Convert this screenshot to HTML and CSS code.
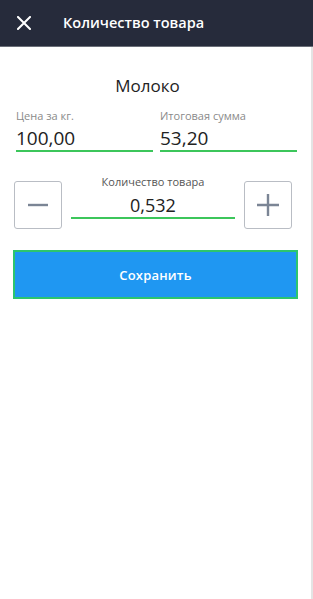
FILE: index.html
```html
<!DOCTYPE html>
<html lang="ru">
<head>
<meta charset="utf-8">
<title>Количество товара</title>
<link rel="stylesheet" href="styles.css">
</head>
<body>
<header class="topbar">
  <button class="close" aria-label="Закрыть">
    <svg width="14" height="14" viewBox="0 0 14 14"><path d="M1 1L13 13M13 1L1 13" stroke="#ffffff" stroke-width="2" stroke-linecap="square" fill="none"/></svg>
  </button>
  <h1 class="title">Количество товара</h1>
</header>
<main class="content">
  <h2 class="product">Молоко</h2>
  <div class="pair">
    <div class="field">
      <label class="label">Цена за кг.</label>
      <div class="value">100,00</div>
    </div>
    <div class="field">
      <label class="label">Итоговая сумма</label>
      <div class="value">53,20</div>
    </div>
  </div>
  <div class="stepper">
    <button class="step" aria-label="Меньше">
      <svg width="22" height="22" viewBox="0 0 22 22"><path d="M1 11H21" stroke="#7b8595" stroke-width="2.4" fill="none"/></svg>
    </button>
    <div class="qty">
      <label class="label qty-label">Количество товара</label>
      <div class="value qty-value">0,532</div>
    </div>
    <button class="step" aria-label="Больше">
      <svg width="22" height="22" viewBox="0 0 22 22"><path d="M0 11H22M11 0V22" stroke="#7b8595" stroke-width="2.4" fill="none"/></svg>
    </button>
  </div>
  <button class="save">Сохранить</button>
</main>
</body>
</html>
```
FILE: styles.css
```css
* { box-sizing: border-box; }
html, body { margin: 0; padding: 0; }
body {
  width: 313px;
  height: 599px;
  background: #ffffff;
  font-family: "Open Sans", "DejaVu Sans", sans-serif;
  color: #222222;
  display: flex;
  flex-direction: column;
  overflow: hidden;
}
.topbar {
  height: 47px;
  flex: none;
  background: #262b3b;
  border-bottom: 1px solid #6a6e78;
  display: flex;
  align-items: center;
  padding-left: 17px;
}
.close {
  background: none;
  border: 0;
  padding: 0;
  width: 14px;
  height: 14px;
  display: flex;
  margin-top: -1px;
}
.title {
  margin: 0 0 0 32px;
  color: #ffffff;
  font-size: 14.5px;
  font-weight: 600;
  margin-top: -1px;
}
.content {
  flex: 1;
  border-right: 2px solid #e4e4e4;
  display: flex;
  flex-direction: column;
}
.product {
  margin: 28px 16px 0 0;
  text-align: center;
  font-size: 17px;
  font-weight: 400;
  line-height: 22px;
  color: #222222;
}
.pair {
  display: flex;
  gap: 7px;
  padding: 0 14px 0 16px;
  margin-top: 12px;
}
.field {
  flex: 1;
  display: flex;
  flex-direction: column;
  border-bottom: 2px solid #3cc65b;
}
.label {
  font-size: 11px;
  line-height: 14px;
  color: #8a8a8a;
}
.value {
  font-size: 19px;
  line-height: 23px;
  margin-top: 4px;
  color: #222222;
}
.stepper {
  display: flex;
  align-items: center;
  padding: 0 19px 0 14px;
  margin-top: 29px;
  gap: 9px;
}
.step {
  width: 48px;
  height: 48px;
  flex: none;
  background: #ffffff;
  border: 1px solid #b9bdc4;
  border-radius: 3px;
  display: flex;
  align-items: center;
  justify-content: center;
  padding: 0;
}
.qty {
  flex: 1;
  display: flex;
  flex-direction: column;
  align-items: center;
  margin-top: -16px;
  border-bottom: 2px solid #3cc65b;
}
.qty-label { color: #555555; }
.qty-value { font-size: 18px; margin-top: 5px; }
.save {
  margin: 21px 13px 0 13px;
  height: 49px;
  background: #1f97f2;
  border: 2px solid #2dc56e;
  color: #ffffff;
  font-family: inherit;
  font-size: 13px;
  font-weight: 600;
  letter-spacing: 0.2px;
}
```
